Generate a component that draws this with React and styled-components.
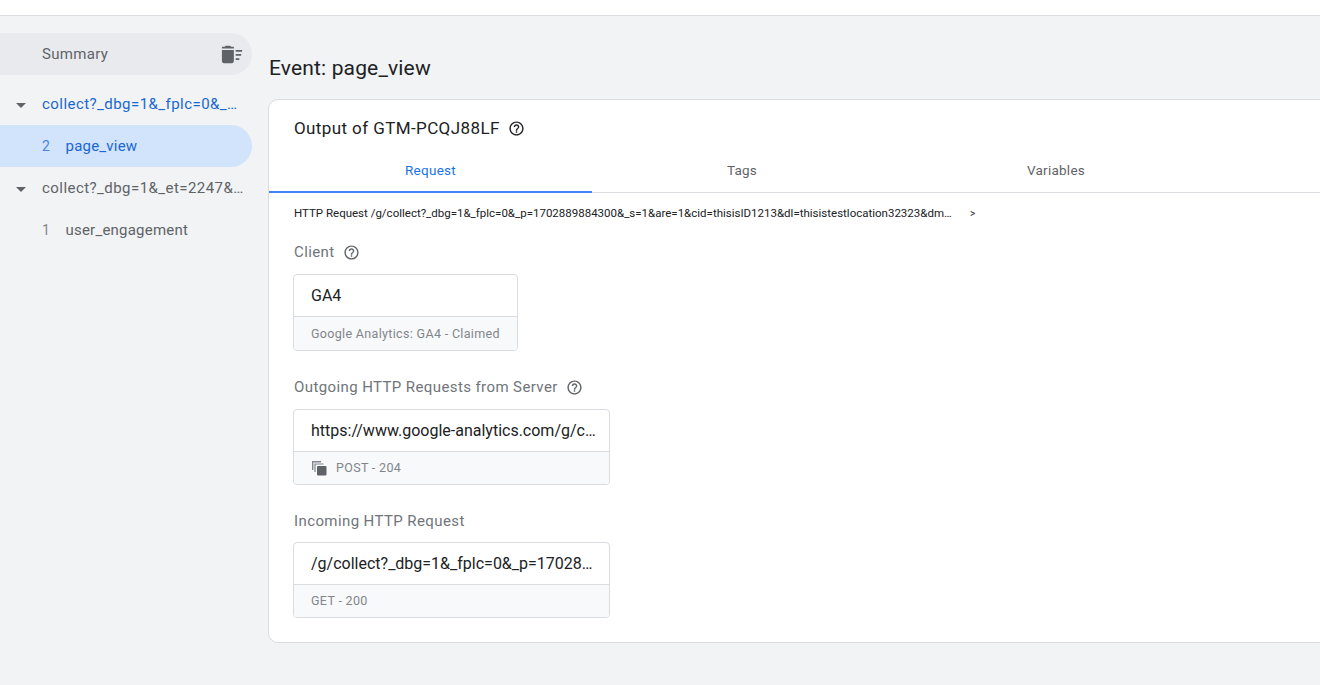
import React from 'react';
import styled, { createGlobalStyle } from 'styled-components';

const GlobalStyle = createGlobalStyle`
  html, body {
    margin: 0;
    height: 100%;
    overflow: hidden;
    background: #f1f3f4;
    font-family: Roboto, "Liberation Sans", sans-serif;
  }
  * {
    box-sizing: border-box;
  }
`;

const TopBar = styled.div`
  height: 16px;
  background: white;
  border-bottom: 1px solid #dadce0;
`;

const Page = styled.div`
  display: flex;
  width: 1320px;
  overflow: hidden;
`;

const Sidebar = styled.nav`
  width: 252px;
  flex: none;
  padding-top: 17px;
`;

const SummaryRow = styled.div`
  height: 42px;
  margin-bottom: 8px;
  padding: 0 9px 0 42px;
  display: flex;
  align-items: center;
  justify-content: space-between;
  background: #e8eaed;
  border-radius: 0 21px 21px 0;
  font-size: 15px;
  letter-spacing: 0.3px;
  color: #5f6368;
`;

const ContainerRow = styled.div`
  height: 42px;
  display: flex;
  align-items: center;
  padding-left: 16px;
  font-size: 15px;
  letter-spacing: 0.45px;
  white-space: nowrap;
  color: ${(p) => (p.$active ? '#1967d2' : '#5f6368')};
`;

const Caret = styled.span`
  width: 0;
  height: 0;
  margin: 2px 16px 0 0;
  flex: none;
  border-left: 5px solid transparent;
  border-right: 5px solid transparent;
  border-top: 5px solid #5f6368;
`;

const EventRow = styled.div`
  height: 42px;
  display: flex;
  align-items: center;
  padding-left: 42px;
  font-size: 15px;
  letter-spacing: 0.22px;
  border-radius: 0 21px 21px 0;
  background: ${(p) => (p.$active ? '#d2e3fc' : 'transparent')};
  color: ${(p) => (p.$active ? '#1967d2' : '#5f6368')};
`;

const EventNumber = styled.span`
  width: 23.5px;
  font-size: 14px;
  opacity: 0.75;
`;

const Main = styled.main`
  flex: 1;
  min-width: 0;
  padding: 36px 0 0 16px;
`;

const Title = styled.h1`
  margin: 0 0 15px 1px;
  font-size: 21px;
  line-height: 32px;
  font-weight: 400;
  letter-spacing: 0.15px;
  color: #202124;
`;

const Card = styled.section`
  width: 1100px;
  height: 544px;
  background: white;
  border: 1px solid #dadce0;
  border-radius: 10px;
`;

const CardHeader = styled.div`
  height: 58px;
  padding: 0 0 2px 25px;
  display: flex;
  align-items: center;
  gap: 8px;
  font-size: 17px;
  letter-spacing: 0.4px;
  color: #202124;
`;

const TabRow = styled.div`
  display: flex;
  height: 35px;
  border-bottom: 1px solid #dadce0;
`;

const Tab = styled.div`
  width: ${(p) => p.$width}px;
  height: 35px;
  padding-top: 4px;
  text-align: center;
  font-size: 13.5px;
  line-height: 16px;
  letter-spacing: 0.25px;
  color: ${(p) => (p.$active ? '#1a73e8' : '#5f6368')};
  border-bottom: 2px solid ${(p) => (p.$active ? '#4285f4' : 'transparent')};
`;

const Body = styled.div`
  padding: 11px 0 0 25px;
`;

const RequestLine = styled.div`
  display: flex;
  height: 18px;
  align-items: center;
  white-space: nowrap;
  font-size: 11.5px;
  color: #202124;
`;

const RequestText = styled.span`
  width: 660px;
  flex: none;
`;

const RequestArrow = styled.span`
  margin-left: 16px;
  font-size: 10px;
`;

const SectionLabel = styled.div`
  height: 20px;
  margin: ${(p) => p.$top}px 0 ${(p) => p.$bottom}px;
  display: flex;
  align-items: center;
  gap: 8px;
  font-size: 15px;
  letter-spacing: 0.4px;
  color: #70757a;
`;

const InfoBox = styled.div`
  width: ${(p) => p.$width}px;
  margin-left: -1px;
  border: 1px solid #dadce0;
  border-radius: 4px;
  overflow: hidden;
`;

const BoxTitle = styled.div`
  height: 42px;
  padding: 0 17px;
  display: flex;
  align-items: center;
  white-space: nowrap;
  border-bottom: 1px solid #dadce0;
  font-size: 16px;
  color: #202124;
`;

const BoxFooter = styled.div`
  height: ${(p) => p.$height}px;
  padding: 0 17px 1px;
  display: flex;
  align-items: center;
  gap: 9px;
  background: #f8f9fa;
  font-size: 12.5px;
  letter-spacing: 0.33px;
  color: #80868b;
`;

function HelpIcon({ color = '#5f6368', size = 17 }) {
  return (
    <svg width={size} height={size} viewBox="0 0 24 24" fill={color}>
      <path d="M11 18h2v-2h-2v2zm1-16C6.48 2 2 6.48 2 12s4.48 10 10 10 10-4.48 10-10S17.52 2 12 2zm0 18c-4.41 0-8-3.59-8-8s3.59-8 8-8 8 3.59 8 8-3.59 8-8 8zm0-14c-2.21 0-4 1.79-4 4h2c0-1.1.9-2 2-2s2 .9 2 2c0 2-3 1.75-3 5h2c0-2.25 3-2.5 3-5 0-2.21-1.79-4-4-4z" />
    </svg>
  );
}

function ClearIcon() {
  return (
    <svg width="22" height="22" viewBox="0 0 24 24" fill="#5f6368">
      <path d="M1 7.5h13V20c0 1.1-.9 2-2 2H3c-1.1 0-2-.9-2-2V7.5zM5 3h5l1 1h3v2H1V4h3l1-1z" />
      <path d="M16 7.5h7v2h-7zM16 12h6v2h-6zM16 16.5h4v2h-4z" />
    </svg>
  );
}

function CopiesIcon() {
  return (
    <svg width="16" height="16" viewBox="0 0 16 16" fill="#80868b">
      <path d="M1 1h9v1.4H2.4V10H1z" />
      <path d="M3.4 3.4h9v1.2H4.6V12H3.4z" />
      <rect x="6" y="6" width="9.5" height="9.5" rx="1" fill="#5f6368" />
    </svg>
  );
}

export default function App() {
  return (
    <>
      <GlobalStyle />
      <TopBar />
      <Page>
        <Sidebar>
          <SummaryRow>
            Summary
            <ClearIcon />
          </SummaryRow>
          <ContainerRow $active>
            <Caret />
            collect?_dbg=1&amp;_fplc=0&amp;_…
          </ContainerRow>
          <EventRow $active>
            <EventNumber>2</EventNumber>
            page_view
          </EventRow>
          <ContainerRow>
            <Caret />
            collect?_dbg=1&amp;_et=2247&amp;…
          </ContainerRow>
          <EventRow>
            <EventNumber>1</EventNumber>
            user_engagement
          </EventRow>
        </Sidebar>
        <Main>
          <Title>Event: page_view</Title>
          <Card>
            <CardHeader>
              Output of GTM-PCQJ88LF
              <HelpIcon color="#202124" />
            </CardHeader>
            <TabRow>
              <Tab $active $width={323}>Request</Tab>
              <Tab $width={300}>Tags</Tab>
              <Tab $width={328}>Variables</Tab>
            </TabRow>
            <Body>
              <RequestLine>
                <RequestText>
                  HTTP Request /g/collect?_dbg=1&amp;_fplc=0&amp;_p=1702889884300&amp;_s=1&amp;are=1&amp;cid=thisisID1213&amp;dl=thisistestlocation32323&amp;dm…
                </RequestText>
                <RequestArrow>&gt;</RequestArrow>
              </RequestLine>
              <SectionLabel $top={20} $bottom={12}>
                Client
                <HelpIcon />
              </SectionLabel>
              <InfoBox $width={225}>
                <BoxTitle>GA4</BoxTitle>
                <BoxFooter $height={33}>Google Analytics: GA4 - Claimed</BoxFooter>
              </InfoBox>
              <SectionLabel $top={26} $bottom={12}>
                Outgoing HTTP Requests from Server
                <HelpIcon />
              </SectionLabel>
              <InfoBox $width={317}>
                <BoxTitle>https://www.google-analytics.com/g/c…</BoxTitle>
                <BoxFooter $height={32}>
                  <CopiesIcon />
                  POST - 204
                </BoxFooter>
              </InfoBox>
              <SectionLabel $top={26} $bottom={11}>Incoming HTTP Request</SectionLabel>
              <InfoBox $width={317}>
                <BoxTitle>/g/collect?_dbg=1&amp;_fplc=0&amp;_p=17028…</BoxTitle>
                <BoxFooter $height={32}>GET - 200</BoxFooter>
              </InfoBox>
            </Body>
          </Card>
        </Main>
      </Page>
    </>
  );
}
